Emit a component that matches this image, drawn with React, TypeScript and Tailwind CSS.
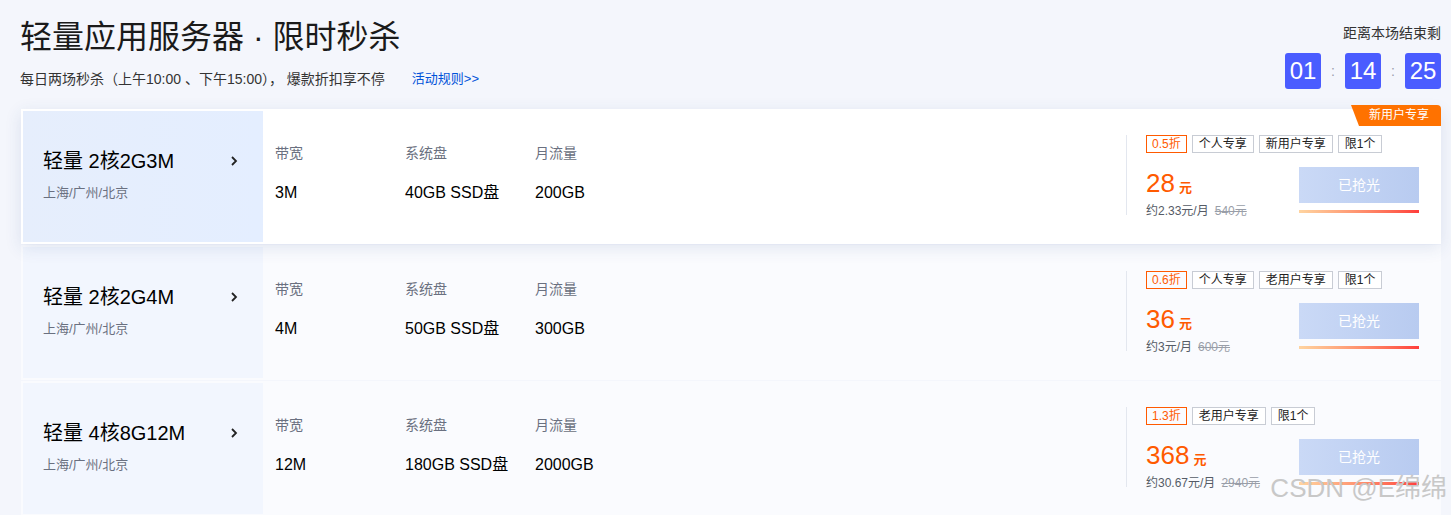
import React from "react";

type Item = {
  name: string;
  bw: string;
  disk: string;
  flow: string;
  discount: string;
  tags: string[];
  price: string;
  monthly: string;
  orig: string;
  active?: boolean;
  badge?: boolean;
};

const items: Item[] = [
  { name: "轻量 2核2G3M", bw: "3M", disk: "40GB SSD盘", flow: "200GB", discount: "0.5折", tags: ["个人专享", "新用户专享", "限1个"], price: "28", monthly: "约2.33元/月", orig: "540元", active: true, badge: true },
  { name: "轻量 2核2G4M", bw: "4M", disk: "50GB SSD盘", flow: "300GB", discount: "0.6折", tags: ["个人专享", "老用户专享", "限1个"], price: "36", monthly: "约3元/月", orig: "600元" },
  { name: "轻量 4核8G12M", bw: "12M", disk: "180GB SSD盘", flow: "2000GB", discount: "1.3折", tags: ["老用户专享", "限1个"], price: "368", monthly: "约30.67元/月", orig: "2940元" },
];

function Card({ it }: { it: Item }) {
  return (
    <div
      className={
        "relative flex h-[135px] p-[2px] " +
        (it.active ? "bg-white shadow-[0_4px_16px_rgba(40,70,140,0.12)] z-10" : "bg-[#fafbfe]")
      }
    >
      {it.badge && (
        <div className="absolute right-0 top-[-4px] h-[21px] w-[90px] bg-[#ff7200] rounded-tr-[4px] text-white text-[12px] leading-[21px] pl-[18px] [clip-path:polygon(0_0,100%_0,100%_100%,8px_100%)]">
          新用户专享
        </div>
      )}
      <div
        className={
          "w-[240px] shrink-0 flex items-center pl-[20px] pr-[24px] " +
          (it.active ? "bg-gradient-to-r from-[#e6eefc] to-[#e4eeff]" : "bg-[#f2f6fe]")
        }
      >
        <div className="flex flex-col w-full mt-[-4px]">
          <div className="flex items-center justify-between">
            <div className="text-[20px] leading-[26px] text-[#000]">{it.name}</div>
            <svg width="10" height="12" viewBox="0 0 10 12">
              <path d="M3 2 L7 6 L3 10" fill="none" stroke="#222" strokeWidth="1.8" />
            </svg>
          </div>
          <div className="mt-[10px] text-[13px] leading-[18px] text-[#6a7080]">上海/广州/北京</div>
        </div>
      </div>
      <div className="flex-1 flex items-center pl-[12px] mt-[-6px]">
        {[
          ["带宽", it.bw],
          ["系统盘", it.disk],
          ["月流量", it.flow],
        ].map(([l, v]) => (
          <div key={l} className="w-[130px] flex flex-col">
            <div className="text-[14px] leading-[18px] text-[#6a7080]">{l}</div>
            <div className="mt-[21px] text-[16px] leading-[20px] text-[#000]">{v}</div>
          </div>
        ))}
      </div>
      <div className="w-[313px] shrink-0 flex items-center pr-[20px]">
        <div className="w-full border-l border-[#e3e7ef] pl-[19px] h-[80px] flex flex-col mt-[-3px]">
          <div className="flex gap-[5px]">
            <span className="h-[18px] px-[5px] border border-[#ff5a00] text-[#ff5a00] text-[12px] leading-[16px]">{it.discount}</span>
            {it.tags.map((t) => (
              <span key={t} className="h-[18px] px-[6px] border border-[#c8ccd4] text-[#222] text-[12px] leading-[16px] bg-white">{t}</span>
            ))}
          </div>
          <div className="flex justify-between mt-[16px]">
            <div className="flex flex-col">
              <div className="flex items-baseline text-[#ff5a00]">
                <span className="text-[26px] leading-[28px]">{it.price}</span>
                <span className="ml-[4px] text-[13px] font-bold">元</span>
              </div>
              <div className="mt-[5px] text-[12px] leading-[16px] text-[#555b66]">
                {it.monthly}
                <span className="ml-[6px] line-through text-[#999ea8]">{it.orig}</span>
              </div>
            </div>
            <div className="flex flex-col mt-[-2px]">
              <div className="w-[120px] h-[36px] bg-gradient-to-r from-[#cad9f6] to-[#b8cbf0] text-white text-[14px] leading-[36px] text-center">已抢光</div>
              <div className="mt-[7px] w-[120px] h-[3px] bg-gradient-to-r from-[#ffd4a0] to-[#ff3c3c]" />
            </div>
          </div>
        </div>
      </div>
    </div>
  );
}

export default function App() {
  return (
    <div
      className="relative w-[1451px] h-[515px] overflow-hidden bg-[#f4f6fc]"
      style={{ fontFamily: '"Liberation Sans", "Noto Sans CJK SC", sans-serif' }}
    >
      <div className="flex justify-between pl-[20px] pr-[10px] h-[109px]">
        <div className="flex flex-col pt-[16px]">
          <div className="text-[32px] leading-[42px] text-[#1a1a1a]">轻量应用服务器 · 限时秒杀</div>
          <div className="mt-[12px] flex text-[14px] leading-[18px] text-[#333]">
            <span>每日两场秒杀（上午10:00 、下午15:00）， 爆款折扣享不停</span>
            <span className="ml-[27px] text-[#0052d9] text-[13px]">活动规则&gt;&gt;</span>
          </div>
        </div>
        <div className="flex flex-col items-end pt-[24px]">
          <div className="text-[14px] leading-[18px] text-[#333]">距离本场结束剩</div>
          <div className="mt-[11px] flex items-center">
            {["01", "14", "25"].map((n, i) => (
              <React.Fragment key={n}>
                {i > 0 && <span className="w-[24px] text-center text-[#9aa0ab] text-[14px]">:</span>}
                <div className="w-[36px] h-[36px] rounded-[3px] bg-[#4a5cff] text-white text-[24px] leading-[36px] text-center">{n}</div>
              </React.Fragment>
            ))}
          </div>
        </div>
      </div>
      <div className="pl-[21px] pr-[10px] flex flex-col gap-[1px]">
        {items.map((it) => (
          <Card key={it.name} it={it} />
        ))}
      </div>
      <div className="absolute right-[4px] bottom-[12px] text-[26px] leading-[30px] text-[#c8c8c8]">CSDN @E绵绵</div>
    </div>
  );
}
